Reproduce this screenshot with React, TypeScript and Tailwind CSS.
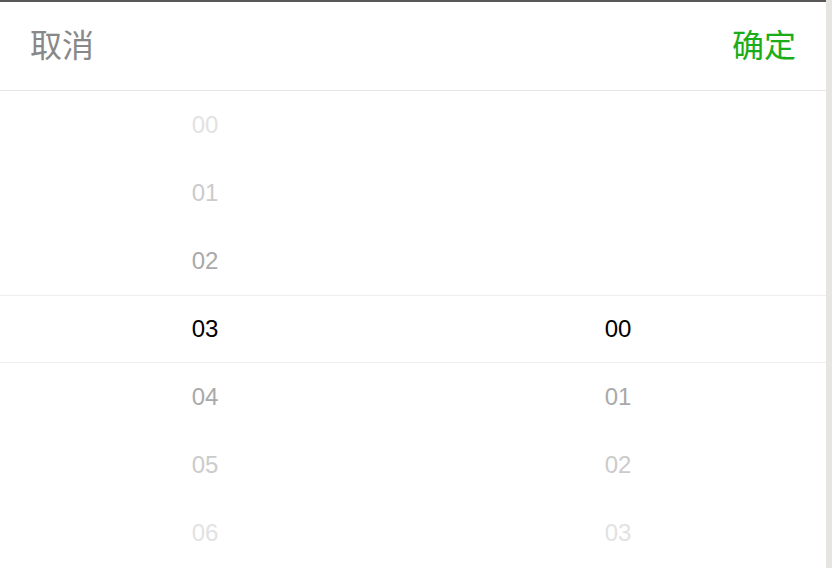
const hours = ["00", "01", "02", "03", "04", "05", "06"]
const minutes = ["", "", "", "00", "01", "02", "03"]

// colour by distance from the selected row
const shade = [
  "text-black",
  "text-[#a9a9a9]",
  "text-[#cbcbcb]",
  "text-[#e2e2e2]",
]

function Column({ items }: { items: string[] }) {
  return (
    <div className="flex flex-1 flex-col pr-[3px]">
      {items.map((item, i) => (
        <div
          key={i}
          className={`flex h-[68px] items-center justify-center text-[24px] ${shade[Math.abs(i - 3)]}`}
        >
          {item}
        </div>
      ))}
    </div>
  )
}

export default function App() {
  return (
    <div
      className="flex h-[568px] w-[832px] overflow-hidden bg-white"
      style={{ fontFamily: '"Liberation Sans", "Noto Sans CJK SC", sans-serif' }}
    >
      <div className="flex w-[826px] flex-col border-t-2 border-[#585858]">
        <div className="flex h-[89px] items-center justify-between border-b border-[#e5e5e5] px-[30px] text-[32px]">
          <button className="text-[#888888]">取消</button>
          <button className="text-[#1aad19]">确定</button>
        </div>
        <div className="relative flex flex-1">
          <div className="pointer-events-none absolute left-0 right-0 top-[204px] h-[68px] border-y border-[#eeeeee]" />
          <Column items={hours} />
          <Column items={minutes} />
        </div>
      </div>
      <div className="w-[6px] bg-[#e7e5e1]" />
    </div>
  )
}
